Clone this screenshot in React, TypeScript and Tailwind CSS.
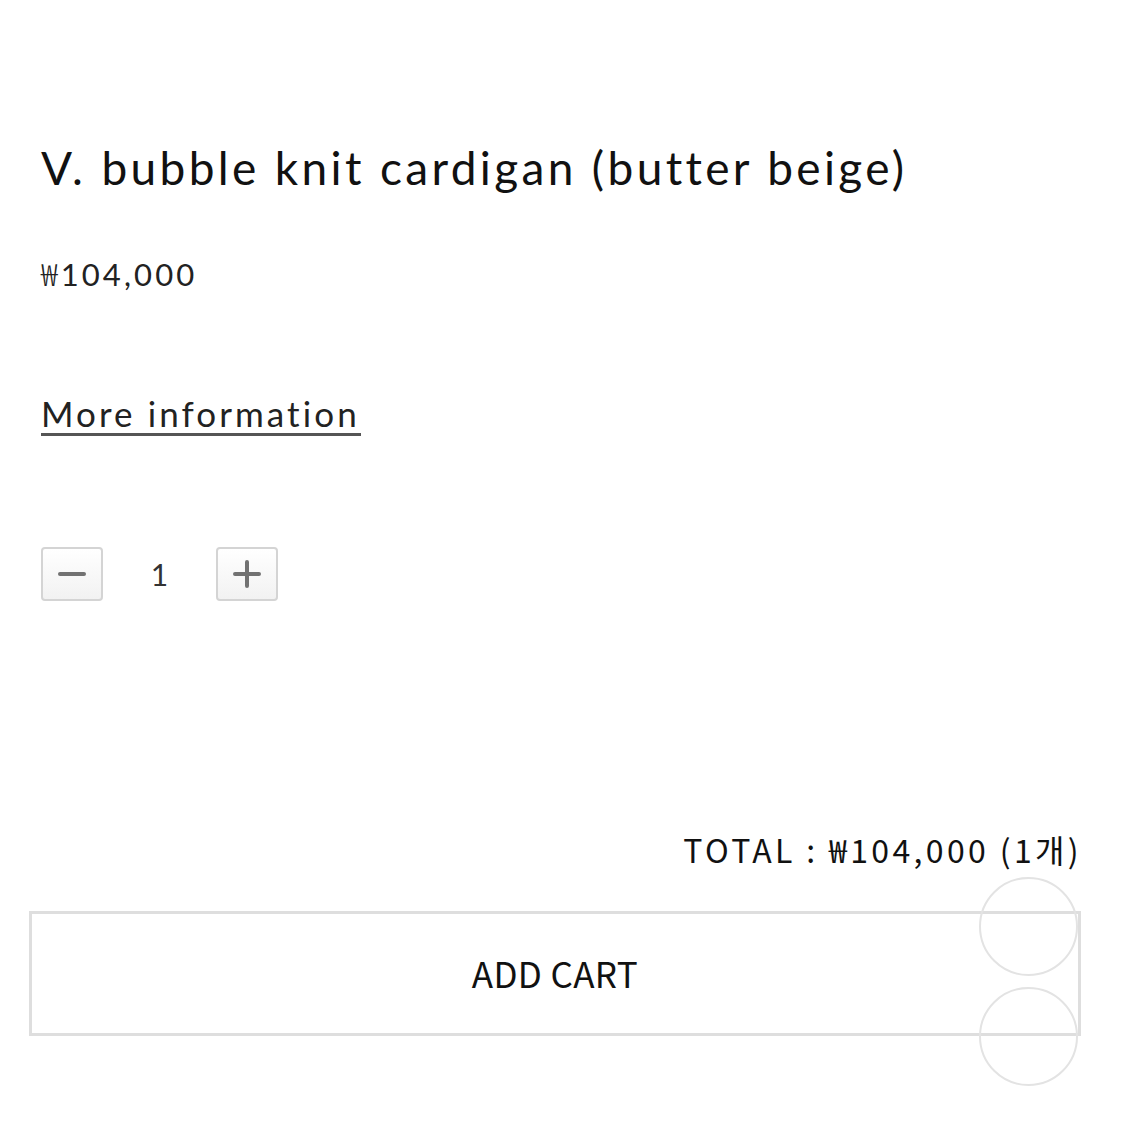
import React from "react";

const lato = "font-['Lato','Noto_Sans_CJK_KR',sans-serif]";
const noto = "font-['Noto_Sans_CJK_KR',sans-serif]";

// won sign comes from the korean fallback font in the original
const Won = () => <span className={`${noto} font-light`}>₩</span>;

const QtyButton = ({ children }: { children: React.ReactNode }) => (
  <button className="w-[62px] h-[54px] rounded-[4px] border-2 border-[#d4d4d4] bg-gradient-to-b from-white to-[#f2f2f2] flex items-center justify-center">
    {children}
  </button>
);

export default function App() {
  return (
    <div className={`relative w-[1125px] h-[1125px] bg-white overflow-hidden text-[#111] ${lato}`}>
      <div className="pl-[41px] pr-[44px] pt-[138px]">
        {/* Title */}
        <h1 className="text-[46px] leading-[60px] tracking-[0.073em] font-normal whitespace-nowrap">
          V. bubble knit cardigan (butter beige)
        </h1>

        {/* Price */}
        <p className="mt-[55px] text-[31px] leading-[40px] tracking-[0.1em] text-[#222]">
          <Won />104,000
        </p>

        {/* More info */}
        <div className="mt-[99px]">
          <span className="inline-block text-[35px] leading-[40px] tracking-[0.088em] text-[#222] border-b-[3px] border-[#555] pr-[1px]">
            More information
          </span>
        </div>

        {/* Quantity */}
        <div className="mt-[111px] flex items-center">
          <QtyButton>
            <svg width="30" height="30" viewBox="0 0 30 30">
              <path d="M3 15h24" stroke="#727272" strokeWidth="4" strokeLinecap="round" />
            </svg>
          </QtyButton>
          <span className="w-[113px] text-center text-[30px] text-[#333]">1</span>
          <QtyButton>
            <svg width="30" height="30" viewBox="0 0 30 30">
              <path d="M15 3v24M3 15h24" stroke="#727272" strokeWidth="4" strokeLinecap="round" />
            </svg>
          </QtyButton>
        </div>
      </div>

      {/* Total */}
      <div className={`mt-[228px] pr-[43px] text-right text-[32px] leading-[40px] tracking-[0.105em] text-[#111] whitespace-nowrap ${noto}`}>
        TOTAL : ₩104,000 (1개)
      </div>

      {/* Add cart */}
      <div className="mt-[42px] pl-[29px] pr-[44px]">
        <button className={`w-full h-[125px] border-[3px] border-[#dedede] bg-white flex items-center justify-center text-[35px] tracking-[0.01em] text-[#111] ${noto}`}>
          ADD CART
        </button>
      </div>

      {/* Floating circles */}
      <div className="absolute left-[979px] top-[877px] w-[99px] h-[99px] rounded-full border-2 border-[#e3e3e3]" />
      <div className="absolute left-[979px] top-[987px] w-[99px] h-[99px] rounded-full border-2 border-[#e3e3e3]" />
    </div>
  );
}
